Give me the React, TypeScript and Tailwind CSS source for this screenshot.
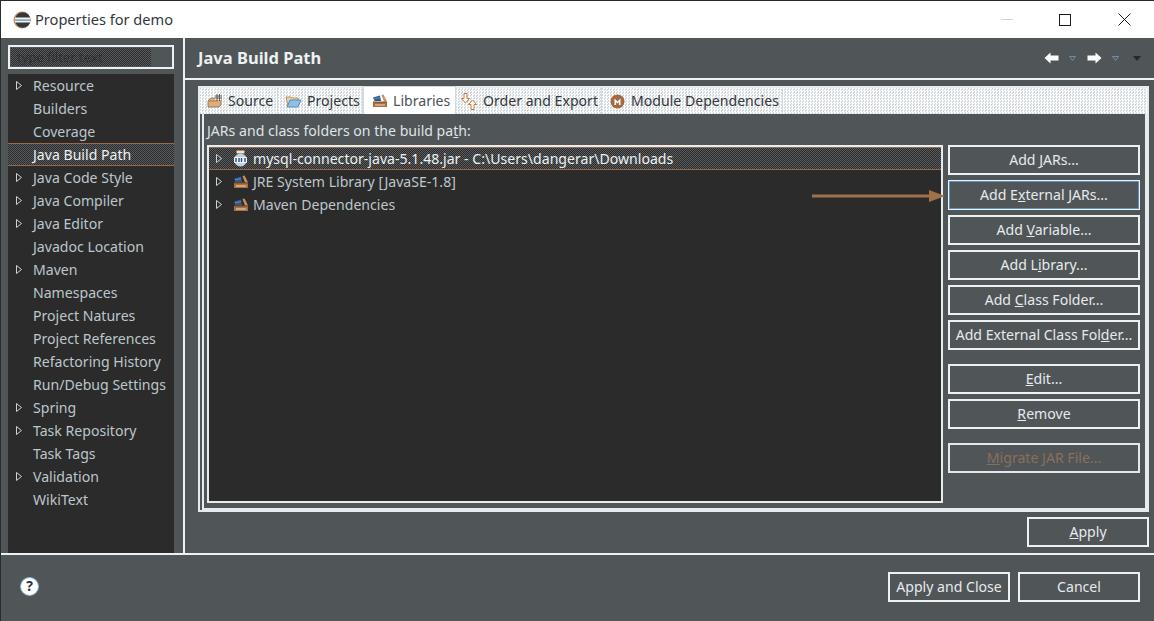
const dither = 'bg-[repeating-conic-gradient(#ffffff_0_25%,#d3dadd_0_50%)] bg-[length:3px_3px]'
const darkDither = 'bg-[repeating-conic-gradient(#5a5d5f_0_25%,#2b2b2b_0_50%)] bg-[length:2px_2px]'

const sidebarItems = [
  { label: 'Resource', arrow: true },
  { label: 'Builders' },
  { label: 'Coverage' },
  { label: 'Java Build Path', selected: true },
  { label: 'Java Code Style', arrow: true },
  { label: 'Java Compiler', arrow: true },
  { label: 'Java Editor', arrow: true },
  { label: 'Javadoc Location' },
  { label: 'Maven', arrow: true },
  { label: 'Namespaces' },
  { label: 'Project Natures' },
  { label: 'Project References' },
  { label: 'Refactoring History' },
  { label: 'Run/Debug Settings' },
  { label: 'Spring', arrow: true },
  { label: 'Task Repository', arrow: true },
  { label: 'Task Tags' },
  { label: 'Validation', arrow: true },
  { label: 'WikiText' },
]

function TreeArrow() {
  return (
    <svg className="w-[8px] h-[12px]" viewBox="0 0 8 12" fill="none">
      <path d="M1.5 1.5v8l5-4z" stroke="#c9d2d6" strokeWidth="1" />
    </svg>
  )
}

function EclipseLogo() {
  return (
    <svg className="w-[18px] h-[18px]" viewBox="0 0 18 18">
      <circle cx="9" cy="9" r="8.5" fill="#d0915a" />
      <circle cx="9.8" cy="9" r="7.8" fill="#33383c" />
      <rect x="2" y="6.5" width="15.5" height="5" fill="#eef2f4" />
      <rect x="2" y="8.5" width="15.5" height="1.2" fill="#6f8796" />
    </svg>
  )
}

function SourceIcon() {
  return (
    <svg className="w-[16px] h-[16px]" viewBox="0 0 16 16">
      <path d="M1 8l3-3h10v7l-2 2H1z" fill="#dcae7c" stroke="#8a6a4a" strokeWidth="0.8" />
      <path d="M8 1h6v6H8z" fill="#f4f4f4" />
      <path d="M8 3h7M8 5h7M10 1v7M12.5 1v7" stroke="#5a4a40" strokeWidth="0.9" />
      <path d="M1 8h10" stroke="#a97c50" strokeWidth="1" />
    </svg>
  )
}

function ProjectsIcon() {
  return (
    <svg className="w-[17px] h-[16px]" viewBox="0 0 17 16">
      <path d="M1 4h5l1 1h6v8H3z" fill="#e8d0a8" stroke="#a9824f" strokeWidth="0.8" />
      <path d="M5 7h11l-3 7H2z" fill="#8fc0e4" stroke="#3f7fb0" strokeWidth="0.8" />
    </svg>
  )
}

function LibraryIcon() {
  return (
    <svg className="w-[16px] h-[14px]" viewBox="0 0 16 14">
      <path d="M1 3.5L8 1.5l1 5.5H2.5z" fill="#2f5a8c" />
      <path d="M2 5l6-1.5" stroke="#7fa6c8" strokeWidth="0.7" />
      <path d="M9.5 1l2-0.5L15 7.5h-3z" fill="#c9935f" />
      <rect x="1" y="7.5" width="14" height="1.5" fill="#8f5b34" />
      <rect x="1" y="9" width="14" height="4" fill="#a9703f" />
      <path d="M3 11h10" stroke="#f0dcc6" strokeWidth="1" />
    </svg>
  )
}

function OrderIcon() {
  return (
    <svg className="w-[17px] h-[17px]" viewBox="0 0 17 17" fill="#fffaf3" stroke="#c07f45" strokeWidth="1">
      <path d="M3 0.5h3v5h2.5L4.5 10 0.5 5.5H3z" />
      <path d="M10 16.5h3v-5h2.5l-4-4.5-4 4.5H10z" />
    </svg>
  )
}

function MavenIcon() {
  return (
    <svg className="w-[15px] h-[15px]" viewBox="0 0 15 15">
      <circle cx="7.5" cy="7.5" r="7" fill="#a46a3f" />
      <path d="M4.5 11V4.5l3 3 3-3V11h-1.6V8L7.5 9.4 6.1 8v3z" fill="#ffffff" />
    </svg>
  )
}

function JarIcon() {
  return (
    <svg className="w-[15px] h-[17px]" viewBox="0 0 15 17">
      <rect x="3.5" y="0.5" width="8" height="3" rx="1" fill="#efe3d6" stroke="#b58558" strokeWidth="0.8" />
      <ellipse cx="7.5" cy="10" rx="6.5" ry="6.5" fill="#b9d3ea" />
      <rect x="1" y="7" width="13" height="6" rx="1" fill="#f2f6f9" />
      <path d="M3 8v4M6 8v4M8.5 8v4M12 8v4" stroke="#28507f" strokeWidth="1.4" />
    </svg>
  )
}

function NavArrow({ dir }: { dir: 'left' | 'right' }) {
  return (
    <svg className="w-[15px] h-[12px]" viewBox="0 0 15 12">
      <path
        d={dir === 'left' ? 'M0.5 6L6.5 0.5V3.5H14.5V8.5H6.5V11.5z' : 'M14.5 6L8.5 0.5V3.5H0.5V8.5H8.5V11.5z'}
        fill="#ffffff"
      />
    </svg>
  )
}

function SmallDrop() {
  return (
    <svg className="w-[7px] h-[5px]" viewBox="0 0 7 5" fill="none">
      <path d="M0.5 0.5h6L3.5 4.5z" stroke="#6f8fa8" strokeWidth="1" />
    </svg>
  )
}

function HelpIcon() {
  return (
    <div className="w-[19px] h-[19px] rounded-full bg-white border border-[#8fb3d2] flex items-center justify-center text-[#26323c] text-[14px] font-bold leading-none">
      ?
    </div>
  )
}

function Tab({
  icon,
  children,
  active,
  className,
}: {
  icon: React.ReactNode
  children: React.ReactNode
  active?: boolean
  className: string
}) {
  return (
    <div
      className={`${className} flex items-center whitespace-nowrap border-r border-[#d3dadd] ${
        active ? 'h-[28px] bg-white text-[#4c5256] border-l border-t' : `h-[26px] text-[#33383b] ${dither}`
      }`}
    >
      {icon}
      <span>{children}</span>
    </div>
  )
}

function ActionButton({ children, className, disabled }: { children: React.ReactNode; className?: string; disabled?: boolean }) {
  return (
    <button
      className={`h-[30px] border-2 flex items-center justify-center ${
        disabled ? 'border-[#e4e8ea] text-[#8a6f5c]' : 'border-[#eef1f2] text-[#e6eaec]'
      } ${className ?? 'w-[192px]'}`}
    >
      <span>{children}</span>
    </button>
  )
}

function LibraryRow({ icon, label, selected }: { icon: React.ReactNode; label: string; selected?: boolean }) {
  return (
    <div className={`h-[23px] flex items-center ${selected ? `border-y border-[#9a6a48] ${darkDither}` : ''}`}>
      <div className="w-[24px] pl-[6px] flex"><TreeArrow /></div>
      <div className="w-[20px] flex">{icon}</div>
      <span className={selected ? 'text-[#eef1f2]' : 'text-[#bcc6cb]'}>{label}</span>
    </div>
  )
}

export default function App() {
  return (
    <div className="w-[1154px] h-[621px] bg-[#505558] flex flex-col overflow-hidden border-t border-l border-[#2b2b2b] text-[14.1px] text-[#e6eaec] font-['Noto_Sans',sans-serif]">
      {/* Title bar */}
      <div className="h-[37px] shrink-0 bg-white flex items-center pl-[12px] text-[#33383b] text-[14.6px]">
        <EclipseLogo />
        <span className="ml-[4px]">Properties for demo</span>
        <div className="ml-auto flex items-center">
          <div className="w-[12px] h-px bg-[#c6d6da] mr-[46px]" />
          <div className="w-[12px] h-[12px] border border-[#1b1b1b] mr-[47px]" />
          <svg className="w-[13px] h-[13px] mr-[23px]" viewBox="0 0 13 13" stroke="#1b1b1b" strokeWidth="1">
            <path d="M0.5 0.5l12 12M12.5 0.5l-12 12" />
          </svg>
        </div>
      </div>

      <div className="flex-1 flex min-h-0">
        {/* Sidebar */}
        <div className="w-[184px] shrink-0 border-r-2 border-[#eef1f2] flex flex-col pl-[7px] pr-[9px] pt-[7px]">
          <div className="h-[24px] border-2 border-[#eef1f2] p-px flex">
            <div className={`w-[140px] text-[#2f3234] pl-[6px] leading-[18px] text-[13px] ${darkDither}`}>type filter text</div>
          </div>
          <div className="flex-1 mt-[5px] bg-[#2b2b2b]">
            {sidebarItems.map((item) => (
              <div
                key={item.label}
                className={`h-[23px] flex items-center ${
                  item.selected ? `border-y border-[#9a6a48] ${darkDither}` : ''
                }`}
              >
                <div className="w-[25px] pl-[7px] flex">{item.arrow && <TreeArrow />}</div>
                <span className={item.selected ? 'text-[#eef1f2]' : 'text-[#bcc6cb]'}>{item.label}</span>
              </div>
            ))}
          </div>
        </div>

        {/* Main */}
        <div className="flex-1 flex flex-col min-w-0">
          <div className="h-[42px] shrink-0 border-b-2 border-[#eef1f2] flex items-center pl-[13px] pr-[13px]">
            <span className="font-bold text-[16.5px] text-[#eef1f2]">Java Build Path</span>
            <div className="ml-auto flex items-center">
              <NavArrow dir="left" />
              <div className="ml-[10px] mr-[11px]"><SmallDrop /></div>
              <NavArrow dir="right" />
              <div className="ml-[10px] mr-[14px]"><SmallDrop /></div>
              <div className="w-0 h-0 border-x-[4px] border-x-transparent border-t-[5px] border-t-[#26292b]" />
            </div>
          </div>

          <div className="flex-1 flex flex-col pl-[13px] pr-[5px] pt-[6px]">
            {/* Tab folder */}
            <div className="h-[426px] w-[951px] border-2 border-[#e6ecee] flex flex-col relative">
              <div className={`h-[26px] flex items-end shrink-0 ${dither}`}>
                <Tab className="w-[78px] pl-[7px] gap-[5px]" icon={<SourceIcon />}>Source</Tab>
                <Tab className="w-[85px] pl-[7px] gap-[5px]" icon={<ProjectsIcon />}>Projects</Tab>
                <Tab className="w-[93px] pl-[8px] gap-[5px]" active icon={<LibraryIcon />}>Libraries</Tab>
                <Tab className="w-[146px] pl-[5px] gap-[5px]" icon={<OrderIcon />}>Order and Export</Tab>
                <Tab className="w-[181px] pl-[8px] gap-[6px]" icon={<MavenIcon />}>Module Dependencies</Tab>
              </div>
              <div className="flex-1 border-2 border-t-0 border-[#e6ecee] ml-[2px] flex flex-col pl-[3px] min-h-0">
                <div className="h-[31px] flex items-center text-[#dfe4e6] pt-[3px]">
                  <span>JARs and class folders on the build pa<u>t</u>h:</span>
                </div>
                <div className="flex gap-[5px] flex-1 min-h-0">
                  {/* Library tree */}
                  <div className="w-[736px] h-[358px] border-2 border-[#e6ecee] bg-[#2b2b2b]">
                    <LibraryRow selected icon={<JarIcon />} label="mysql-connector-java-5.1.48.jar - C:\Users\dangerar\Downloads" />
                    <LibraryRow icon={<LibraryIcon />} label="JRE System Library [JavaSE-1.8]" />
                    <LibraryRow icon={<LibraryIcon />} label="Maven Dependencies" />
                  </div>

                  {/* Buttons */}
                  <div className="flex flex-col">
                    <div className="flex flex-col gap-[5px]">
                      <ActionButton>Add <u>J</u>ARs...</ActionButton>
                      <ActionButton className="w-[192px] outline outline-1 outline-[#5d92c4] -outline-offset-2">Add E<u>x</u>ternal JARs...</ActionButton>
                      <ActionButton>Add <u>V</u>ariable...</ActionButton>
                      <ActionButton>Add L<u>i</u>brary...</ActionButton>
                      <ActionButton>Add <u>C</u>lass Folder...</ActionButton>
                      <ActionButton>Add External Class Fol<u>d</u>er...</ActionButton>
                    </div>
                    <div className="flex flex-col gap-[5px] mt-[14px]">
                      <ActionButton><u>E</u>dit...</ActionButton>
                      <ActionButton><u>R</u>emove</ActionButton>
                    </div>
                    <div className="mt-[14px]">
                      <ActionButton disabled><u>M</u>igrate JAR File...</ActionButton>
                    </div>
                  </div>
                </div>
              </div>

              {/* Annotation arrow */}
              <svg className="absolute left-[612px] top-[101px] w-[133px] h-[14px]" viewBox="0 0 133 14">
                <path d="M0 7h118" stroke="#a0704a" strokeWidth="3" />
                <path d="M117 1l16 6-16 6z" fill="#a0704a" />
              </svg>
            </div>

            <div className="flex justify-end mt-[5px]">
              <ActionButton className="w-[122px]"><u>A</u>pply</ActionButton>
            </div>
          </div>
        </div>
      </div>

      {/* Footer */}
      <div className="h-[68px] shrink-0 border-t-2 border-[#eef1f2] flex items-center pl-[19px] pr-[14px] pb-[2px]">
        <div className="-mt-[2px]"><HelpIcon /></div>
        <div className="ml-auto flex gap-[8px]">
          <ActionButton className="w-[122px]">Apply and Close</ActionButton>
          <ActionButton className="w-[122px]">Cancel</ActionButton>
        </div>
      </div>
    </div>
  )
}
